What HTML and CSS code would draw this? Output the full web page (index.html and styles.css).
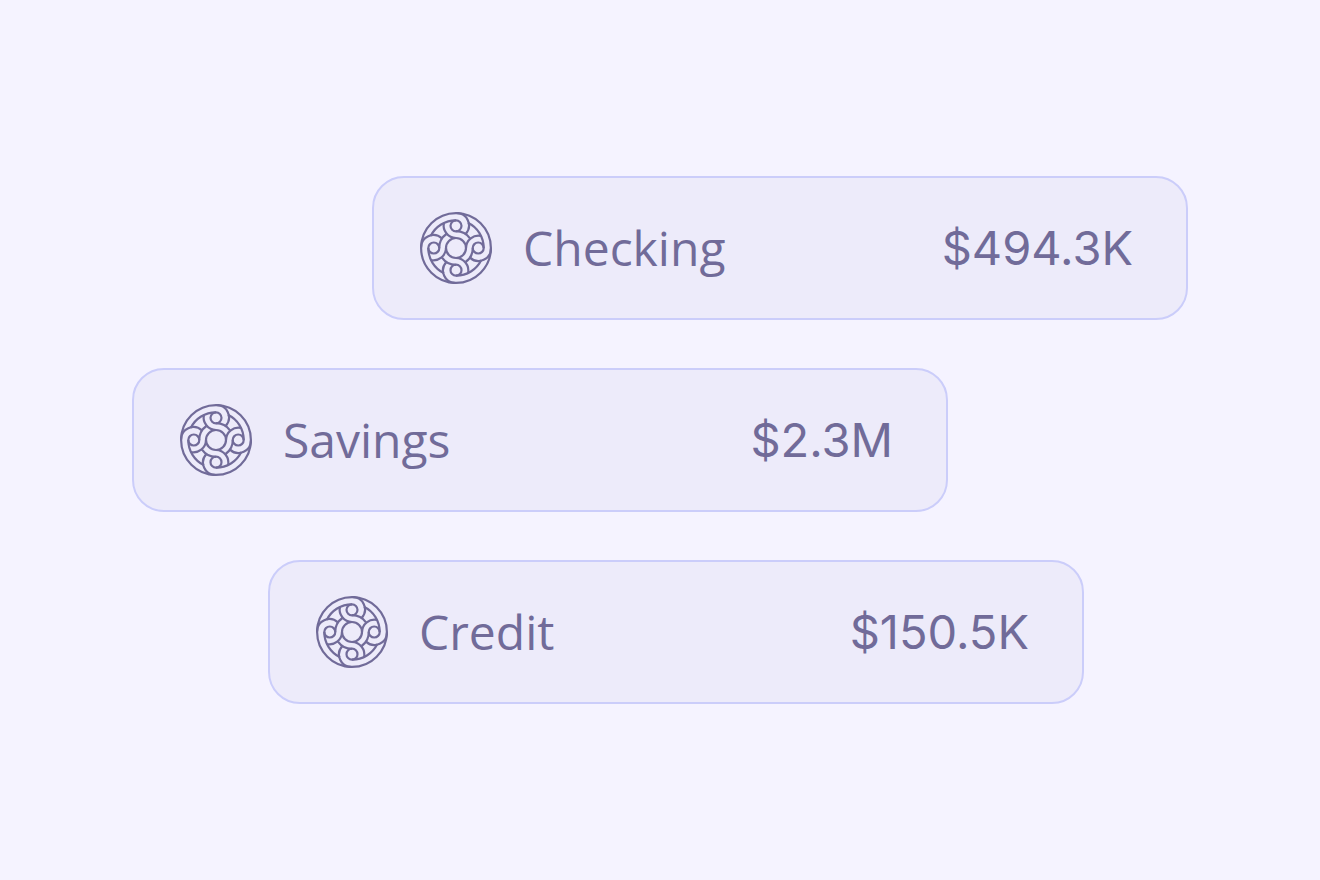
FILE: index.html
```html
<!DOCTYPE html>
<html lang="en">
<head>
<meta charset="utf-8">
<meta name="viewport" content="width=device-width, initial-scale=1">
<title>Accounts</title>
<link rel="stylesheet" href="styles.css">
</head>
<body>
<svg class="defs" aria-hidden="true">
  <symbol id="knot" viewBox="-36 -36 72 72">
    <circle r="34.900"/>
    <circle r="10"/>
    <g id="arm">
      <circle cy="-22.200" r="5.500"/>
      <path d="M-25.300 -12A28 28 0 0 1 0 -27.700"/>
      <path d="M0 -35A12.500 12.500 0 0 1 9.600 -14"/>
      <path d="M-12 -25.300A12.500 12.500 0 0 0 0 -10"/>
      <path d="M0 -16.800A17 17 0 0 1 14 -9.600"/>
    </g>
    <use href="#arm" transform="rotate(90)"/>
    <use href="#arm" transform="rotate(180)"/>
    <use href="#arm" transform="rotate(270)"/>
  </symbol>
</svg>
<main class="accounts">
  <ul class="list">
    <li class="card card-right"><svg class="icon" aria-hidden="true"><use href="#knot"/></svg><span class="name">Checking</span><span class="amount">$494.3K</span></li>
    <li class="card card-left"><svg class="icon" aria-hidden="true"><use href="#knot"/></svg><span class="name">Savings</span><span class="amount">$2.3M</span></li>
    <li class="card card-middle"><svg class="icon" aria-hidden="true"><use href="#knot"/></svg><span class="name">Credit</span><span class="amount">$150.5K</span></li>
  </ul>
</main>
</body>
</html>
```
FILE: styles.css
```css
* { box-sizing: border-box; }
body {
  margin: 0;
  background: #f5f3ff;
  color: #716b99;
  font-family: Inter, "Liberation Sans", sans-serif;
}
.defs { position: absolute; width: 0; height: 0; }
.accounts {
  min-height: 100vh;
  display: flex;
  flex-direction: column;
  justify-content: center;
  padding: 48px 10%;
}
.list {
  list-style: none;
  margin: 0;
  padding: 0;
  display: flex;
  flex-direction: column;
  gap: 48px;
}
.card {
  width: 100%;
  max-width: 816px;
  display: flex;
  align-items: center;
  gap: 31px;
  padding: 34px 53px 34px 46px;
  border: 2px solid #cbcdfa;
  border-radius: 32px;
  background: #edebfa;
  line-height: 72px;
}
.card-right { align-self: flex-end; }
.card-left { align-self: flex-start; }
.card-middle { align-self: flex-end; margin-right: 104px; }
.icon {
  width: 72px;
  height: 72px;
  flex: none;
  fill: none;
  stroke: currentColor;
  stroke-width: 2.2;
}
.name { flex: 1; font-family: "Open Sans", sans-serif; font-size: 48px; }
.amount { font-family: Inter, sans-serif; font-size: 47px; }
```
